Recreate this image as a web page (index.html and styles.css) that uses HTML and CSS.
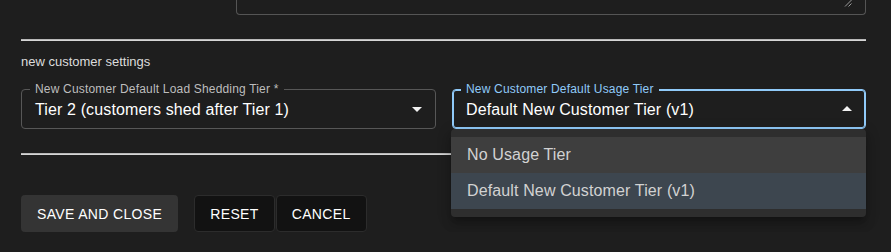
FILE: index.html
```html
<!DOCTYPE html>
<html lang="en">
<head>
<meta charset="utf-8">
<title>New customer settings</title>
<link rel="stylesheet" href="styles.css">
</head>
<body>
<div class="page">
  <div class="notes-row">
    <div class="notes-spacer"></div>
    <div class="textarea">
      <svg class="grip" width="8" height="8" viewBox="0 0 8 8"><path d="M1 7.5L7.5 1M4.5 7.5L7.5 4.5" stroke="#9a9a9a" stroke-width="1" fill="none"/></svg>
    </div>
  </div>
  <div class="divider"></div>
  <div class="section-title">new customer settings</div>
  <div class="fields">
    <div class="field">
      <span class="field-label">New Customer Default Load Shedding Tier&nbsp;*</span>
      <div class="select-value">Tier 2 (customers shed after Tier 1)</div>
      <svg class="arrow" width="24" height="24" viewBox="0 0 24 24"><path d="M7 10l5 5 5-5z" fill="#f2f2f2"/></svg>
    </div>
    <div class="field focused">
      <span class="field-label">New Customer Default Usage Tier</span>
      <div class="select-value">Default New Customer Tier (v1)</div>
      <svg class="arrow open" width="24" height="24" viewBox="0 0 24 24"><path d="M7 10l5 5 5-5z" fill="#f2f2f2"/></svg>
      <ul class="menu">
        <li class="menu-item hovered">No Usage Tier</li>
        <li class="menu-item selected">Default New Customer Tier (v1)</li>
      </ul>
    </div>
  </div>
  <div class="divider second"></div>
  <div class="actions">
    <button class="btn btn-save">SAVE AND CLOSE</button>
    <div class="btn-group">
      <button class="btn btn-dark">RESET</button>
      <button class="btn btn-dark">CANCEL</button>
    </div>
  </div>
</div>
</body>
</html>
```

FILE: styles.css
```css
html, body {
  margin: 0;
  padding: 0;
  background: #1e1e1e;
}

body {
  font-family: "Liberation Sans", Arial, sans-serif;
  color: #ffffff;
}

.page {
  width: 845px;
  margin-left: 21px;
}

.notes-row {
  display: flex;
}

.notes-spacer {
  width: 215px;
  flex: none;
}

.textarea {
  flex: 1;
  height: 14px;
  border: 1px solid #555555;
  border-top: none;
  border-radius: 0 0 4px 4px;
  position: relative;
}

.grip {
  position: absolute;
  right: 13px;
  top: -1px;
}

.divider {
  height: 2px;
  margin-top: 24px;
  background: #d6d6d6;
  border-top: 1px solid #b8b8b8;
  box-sizing: border-box;
}

.section-title {
  margin-top: 13px;
  font-size: 13px;
  line-height: 15px;
  color: #dcdcdc;
}

.fields {
  display: grid;
  grid-template-columns: 415px 414px;
  column-gap: 16px;
  margin-top: 20px;
}

.field {
  position: relative;
  height: 40px;
  box-sizing: border-box;
  border: 1px solid #575757;
  border-radius: 4px;
  padding: 8px 40px 8px 13px;
}

.field.focused {
  border-color: #90caf9;
  box-shadow: inset 0 0 0 1px #90caf9;
}

.field-label {
  position: absolute;
  left: 8px;
  top: -8px;
  padding: 0 5px;
  background: #1e1e1e;
  font-size: 12px;
  line-height: 14px;
  letter-spacing: 0.18px;
  color: #bdbdbd;
  white-space: nowrap;
}

.field.focused .field-label {
  color: #90caf9;
}

.select-value {
  font-size: 16px;
  line-height: 23px;
  letter-spacing: 0.13px;
  color: #ffffff;
  white-space: nowrap;
}

.arrow {
  position: absolute;
  right: 6px;
  top: 7px;
}

.arrow.open {
  transform: rotate(180deg);
}

.menu {
  position: absolute;
  left: -2px;
  right: -1px;
  top: calc(100% + 1px);
  margin: 0;
  padding: 8px 0;
  list-style: none;
  background: #2e2e2e;
  border-radius: 4px;
  box-shadow: 0 5px 5px -3px rgba(0,0,0,0.2), 0 8px 10px 1px rgba(0,0,0,0.14), 0 3px 14px 2px rgba(0,0,0,0.12);
  z-index: 2;
}

.menu-item {
  height: 36px;
  box-sizing: border-box;
  padding: 6px 16px;
  font-size: 16px;
  line-height: 24px;
  letter-spacing: 0.13px;
  color: #d2d2d2;
}

.menu-item.hovered {
  background: #3e3e3e;
}

.menu-item.selected {
  background: #3d464f;
}

.divider.second {
  margin-top: 24px;
}

.actions {
  display: flex;
  align-items: center;
  margin-top: 40px;
}

.btn-group {
  display: flex;
  gap: 1px;
  margin-left: 16px;
}

.btn {
  height: 37px;
  padding: 0 16px;
  font-family: "Liberation Sans", Arial, sans-serif;
  font-size: 14px;
  letter-spacing: 0.35px;
  color: #ffffff;
  border-radius: 4px;
  cursor: pointer;
}

.btn-save {
  background: #343434;
  border: none;
}

.btn-dark {
  background: #121212;
  border: 1px solid #2c2c2c;
  padding: 0 15px;
}
```
